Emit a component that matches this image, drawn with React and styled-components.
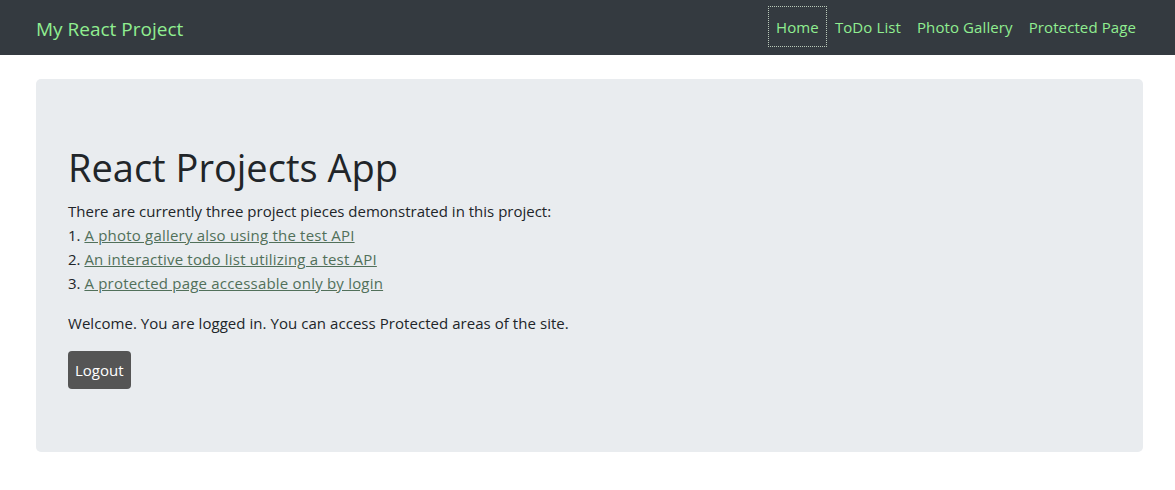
import React from 'react';
import styled, { createGlobalStyle } from 'styled-components';

const GlobalStyle = createGlobalStyle`
	html, body {
		margin: 0;
		padding: 0;
		background: #ffffff;
	}
	body {
		font-family: 'Open Sans', 'Noto Sans', sans-serif;
		font-size: 15px;
		line-height: 24px;
		color: #212529;
	}
`;

const links = ['Home', 'ToDo List', 'Photo Gallery', 'Protected Page'];

const projects = [
	'A photo gallery also using the test API',
	'An interactive todo list utilizing a test API',
	'A protected page accessable only by login',
];

const App = () => {
	return (
		<>
			<GlobalStyle />
			<Navbar>
				<Brand href="#">My React Project</Brand>
				<NavList>
					{links.map((link, i) => (
						<NavLink key={link} href="#" $active={i === 0}>
							{link}
						</NavLink>
					))}
				</NavList>
			</Navbar>
			<Jumbotron>
				<Title>React Projects App</Title>
				<Text>
					There are currently three project pieces demonstrated in this project:
					{projects.map((p, i) => (
						<div key={p}>
							{i + 1}. <ProjectLink href="#">{p}</ProjectLink>
						</div>
					))}
				</Text>
				<Text $spaced>Welcome. You are logged in. You can access Protected areas of the site.</Text>
				<Button>Logout</Button>
			</Jumbotron>
		</>
	);
};

const Navbar = styled.nav`
	height: 55px;
	background: #343a40;
	display: flex;
	align-items: center;
	justify-content: space-between;
	padding: 0 31px 0 36px;
`;
const Brand = styled.a`
	font-size: 19px;
	color: #90ee90;
	text-decoration: none;
	line-height: 30px;
	margin-top: 2px;
`;
const NavList = styled.div`
	display: flex;
	align-items: center;
`;
const NavLink = styled.a`
	display: block;
	height: 41px;
	box-sizing: border-box;
	padding: 0 8px;
	line-height: 43px;
	letter-spacing: 0.1px;
	color: #90ee90;
	text-decoration: none;
	outline: ${(p) => (p.$active ? '1px dotted #b9c9b9' : 'none')};
	outline-offset: -1px;
	margin-top: -2px;
`;
const Jumbotron = styled.div`
	margin: 24px 32px 0 36px;
	background: #e9ecef;
	border-radius: 5px;
	padding: 64px 32px;
	height: 373px;
	box-sizing: border-box;
`;
const Title = styled.h1`
	margin: 0 0 8px;
	font-size: 38px;
	font-weight: 400;
	line-height: 48px;
`;
const Text = styled.div`
	margin: 0 0 16px;
	letter-spacing: ${(p) => (p.$spaced ? '0.05px' : '0')};
`;
const ProjectLink = styled.a`
	color: #51705a;
	letter-spacing: 0.2px;
	text-decoration: underline;
`;
const Button = styled.button`
	font-family: inherit;
	font-size: 15px;
	line-height: 24px;
	height: 38px;
	padding: 0 7px;
	background: #555555;
	color: #ffffff;
	border: none;
	border-radius: 4px;
`;

export default App;
